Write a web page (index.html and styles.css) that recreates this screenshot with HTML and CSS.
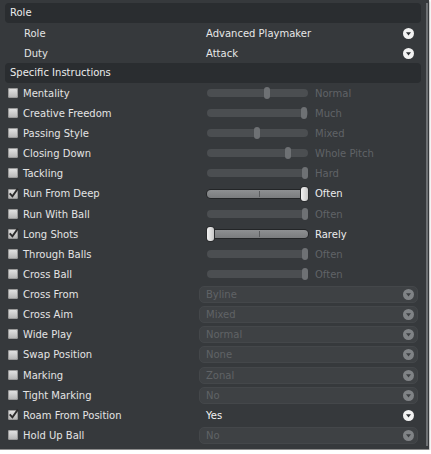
FILE: index.html
```html
<!DOCTYPE html>
<html>
<head>
<meta charset="utf-8">
<link rel="stylesheet" href="styles.css">
</head>
<body>
<div class="window">
  <div class="content">
    <div class="header">Role</div>
    <div class="row">
      <span class="plabel">Role</span>
      <div class="select on"><span>Advanced Playmaker</span><svg class="arrow" viewBox="0 0 11 11"><circle cx="5.5" cy="5.5" r="5.5" class="ac"/><path d="M3 4.2 H8 L5.5 7.4 Z" class="at"/></svg></div>
    </div>
    <div class="row">
      <span class="plabel">Duty</span>
      <div class="select on"><span>Attack</span><svg class="arrow" viewBox="0 0 11 11"><circle cx="5.5" cy="5.5" r="5.5" class="ac"/><path d="M3 4.2 H8 L5.5 7.4 Z" class="at"/></svg></div>
    </div>
    <div class="header">Specific Instructions</div>

    <div class="row"><span class="cb"></span><span class="label">Mentality</span>
      <div class="slider"><div class="track"><div class="knob" style="left:57px"></div></div><span class="val">Normal</span></div></div>
    <div class="row"><span class="cb"></span><span class="label">Creative Freedom</span>
      <div class="slider"><div class="track"><div class="knob" style="left:94px"></div></div><span class="val">Much</span></div></div>
    <div class="row"><span class="cb"></span><span class="label">Passing Style</span>
      <div class="slider"><div class="track"><div class="knob" style="left:47px"></div></div><span class="val">Mixed</span></div></div>
    <div class="row"><span class="cb"></span><span class="label">Closing Down</span>
      <div class="slider"><div class="track"><div class="knob" style="left:78px"></div></div><span class="val">Whole Pitch</span></div></div>
    <div class="row"><span class="cb"></span><span class="label">Tackling</span>
      <div class="slider"><div class="track"><div class="knob" style="left:95px"></div></div><span class="val">Hard</span></div></div>
    <div class="row tall"><span class="cb checked"><svg viewBox="0 0 12 12"><path d="M2.5 5.8 L5 8.6 L10 1.5" /></svg></span><span class="label">Run From Deep</span>
      <div class="slider on"><div class="track"><span class="tick"></span><div class="knob" style="left:94px"></div></div><span class="val">Often</span></div></div>
    <div class="row"><span class="cb"></span><span class="label">Run With Ball</span>
      <div class="slider"><div class="track"><div class="knob" style="left:95px"></div></div><span class="val">Often</span></div></div>
    <div class="row"><span class="cb checked"><svg viewBox="0 0 12 12"><path d="M2.5 5.8 L5 8.6 L10 1.5" /></svg></span><span class="label">Long Shots</span>
      <div class="slider on"><div class="track"><span class="tick"></span><div class="knob" style="left:0px"></div></div><span class="val">Rarely</span></div></div>
    <div class="row"><span class="cb"></span><span class="label">Through Balls</span>
      <div class="slider"><div class="track"><div class="knob" style="left:95px"></div></div><span class="val">Often</span></div></div>
    <div class="row"><span class="cb"></span><span class="label">Cross Ball</span>
      <div class="slider"><div class="track"><div class="knob" style="left:95px"></div></div><span class="val">Often</span></div></div>

    <div class="row"><span class="cb"></span><span class="label">Cross From</span>
      <div class="select"><span>Byline</span><svg class="arrow" viewBox="0 0 11 11"><circle cx="5.5" cy="5.5" r="5.5" class="ac"/><path d="M3 4.2 H8 L5.5 7.4 Z" class="at"/></svg></div></div>
    <div class="row"><span class="cb"></span><span class="label">Cross Aim</span>
      <div class="select"><span>Mixed</span><svg class="arrow" viewBox="0 0 11 11"><circle cx="5.5" cy="5.5" r="5.5" class="ac"/><path d="M3 4.2 H8 L5.5 7.4 Z" class="at"/></svg></div></div>
    <div class="row"><span class="cb"></span><span class="label">Wide Play</span>
      <div class="select"><span>Normal</span><svg class="arrow" viewBox="0 0 11 11"><circle cx="5.5" cy="5.5" r="5.5" class="ac"/><path d="M3 4.2 H8 L5.5 7.4 Z" class="at"/></svg></div></div>
    <div class="row tall"><span class="cb"></span><span class="label">Swap Position</span>
      <div class="select"><span>None</span><svg class="arrow" viewBox="0 0 11 11"><circle cx="5.5" cy="5.5" r="5.5" class="ac"/><path d="M3 4.2 H8 L5.5 7.4 Z" class="at"/></svg></div></div>
    <div class="row"><span class="cb"></span><span class="label">Marking</span>
      <div class="select"><span>Zonal</span><svg class="arrow" viewBox="0 0 11 11"><circle cx="5.5" cy="5.5" r="5.5" class="ac"/><path d="M3 4.2 H8 L5.5 7.4 Z" class="at"/></svg></div></div>
    <div class="row"><span class="cb"></span><span class="label">Tight Marking</span>
      <div class="select"><span>No</span><svg class="arrow" viewBox="0 0 11 11"><circle cx="5.5" cy="5.5" r="5.5" class="ac"/><path d="M3 4.2 H8 L5.5 7.4 Z" class="at"/></svg></div></div>
    <div class="row"><span class="cb checked"><svg viewBox="0 0 12 12"><path d="M2.5 5.8 L5 8.6 L10 1.5" /></svg></span><span class="label">Roam From Position</span>
      <div class="select on"><span class="strong">Yes</span><svg class="arrow" viewBox="0 0 11 11"><circle cx="5.5" cy="5.5" r="5.5" class="ac"/><path d="M3 4.2 H8 L5.5 7.4 Z" class="at"/></svg></div></div>
    <div class="row"><span class="cb"></span><span class="label">Hold Up Ball</span>
      <div class="select"><span>No</span><svg class="arrow" viewBox="0 0 11 11"><circle cx="5.5" cy="5.5" r="5.5" class="ac"/><path d="M3 4.2 H8 L5.5 7.4 Z" class="at"/></svg></div></div>
  </div>
  <div class="scrollbar"></div>
</div>
</body>
</html>
```
FILE: styles.css
```css
html, body {
  margin: 0;
  padding: 0;
  background: #ffffff;
}
body {
  font-family: "DejaVu Sans", Verdana, sans-serif;
  font-size: 10px;
  color: #e4e4e4;
}
.window {
  width: 429px;
  height: 450px;
  background: #36393c;
  display: flex;
  box-shadow: 0 1px 2px rgba(0,0,0,0.6);
  border-bottom: 1px solid #8c8c8c;
  box-sizing: border-box;
}
.content {
  width: 416px;
  padding: 3px 0 0 5px;
}
.scrollbar {
  width: 2px;
  margin: 3px 0 3px 5px;
  background: #6f7275;
}
.header {
  height: 20px;
  line-height: 20px;
  background: #2a2d30;
  border-radius: 4px;
  padding-left: 5px;
  color: #ececec;
}
.row {
  height: 20px;
  display: flex;
  align-items: center;
}
.row.tall {
  height: 21px;
}
.plabel {
  flex: 0 0 175px;
  padding-left: 19px;
}
.cb {
  flex: 0 0 auto;
  width: 10px;
  height: 10px;
  margin-left: 3px;
  border-radius: 2px;
  background: linear-gradient(#e6e6e6, #b4b4b4);
  box-shadow: inset 0 0 0 1px #9a9a9a;
  position: relative;
}
.cb svg {
  position: absolute;
  left: -1px;
  top: -2px;
  width: 13px;
  height: 13px;
}
.cb svg path {
  fill: none;
  stroke: #2a2a2a;
  stroke-width: 1.7;
}
.label {
  flex: 0 0 176px;
  margin-left: 5px;
  white-space: nowrap;
}
.slider {
  width: 219px;
  display: flex;
  align-items: center;
  padding-left: 8px;
  box-sizing: border-box;
}
.track {
  position: relative;
  width: 101px;
  height: 8px;
  border-radius: 4px;
  background: #4b4e51;
  margin-right: 7px;
}
.knob {
  position: absolute;
  top: -2px;
  width: 6px;
  height: 12px;
  border-radius: 3px;
  background: #6e7174;
}
.val {
  color: #606367;
}
.slider.on .track {
  background: linear-gradient(#8e9092, #7a7c7e);
  box-shadow: 0 0 0 1px #232527;
}
.slider.on .tick {
  position: absolute;
  left: 52px;
  top: 1px;
  width: 1px;
  height: 6px;
  background: #5a5c5e;
}
.slider.on .knob {
  top: -3px;
  width: 7px;
  height: 14px;
  border-radius: 3px;
  background: linear-gradient(90deg, #f2f2f2, #c8c8c8);
  box-shadow: 0 0 0 1px #2a2c2e;
}
.slider.on .val {
  color: #ececec;
}
.select {
  width: 219px;
  height: 17px;
  box-sizing: border-box;
  border: 1px solid #44474a;
  border-radius: 5px;
  background: #3e4144;
  display: flex;
  align-items: center;
  justify-content: space-between;
  padding: 0 3px 0 6px;
  color: #606366;
}
.arrow {
  width: 11px;
  height: 11px;
  display: block;
}
.ac { fill: #808386; }
.at { fill: #3e4144; }
.select.on {
  border-color: transparent;
  background: transparent;
  color: #e8e8e8;
}
.select.on .ac { fill: #f2f2f2; }
.select.on .at { fill: #2e3134; }
.strong {
  color: #f4f4f4;
}
```
